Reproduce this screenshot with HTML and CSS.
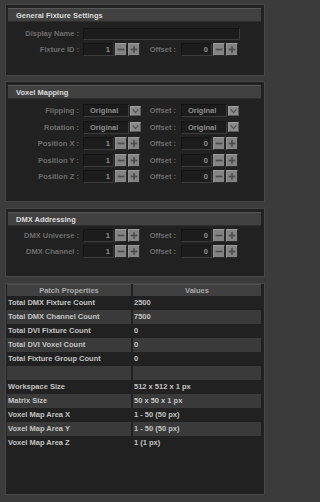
FILE: index.html
```html
<!DOCTYPE html>
<html>
<head>
<meta charset="utf-8">
<link rel="stylesheet" href="styles.css">
</head>
<body>
<div class="page">

  <section class="panel panel-general">
    <div class="panel-head">General Fixture Settings</div>
    <div class="rows">
      <div class="row">
        <span class="lbl">Display Name :</span>
        <span class="field field-wide"></span>
      </div>
      <div class="row">
        <span class="lbl">Fixture ID :</span>
        <span class="spin"><span class="field num">1</span><span class="btn"><svg viewBox="0 0 12 13"><rect x="2" y="5.5" width="8" height="2"/></svg></span><span class="btn"><svg viewBox="0 0 12 13"><rect x="2" y="5.5" width="8" height="2"/><rect x="5" y="2.5" width="2" height="8"/></svg></span></span>
        <span class="lbl">Offset :</span>
        <span class="spin"><span class="field num">0</span><span class="btn"><svg viewBox="0 0 12 13"><rect x="2" y="5.5" width="8" height="2"/></svg></span><span class="btn"><svg viewBox="0 0 12 13"><rect x="2" y="5.5" width="8" height="2"/><rect x="5" y="2.5" width="2" height="8"/></svg></span></span>
      </div>
    </div>
  </section>

  <section class="panel panel-voxel">
    <div class="panel-head">Voxel Mapping</div>
    <div class="rows rows-loose">
      <div class="row">
        <span class="lbl">Flipping :</span>
        <span class="combo"><span class="field sel">Original</span><span class="drop"><svg viewBox="0 0 11 10"><polyline points="2,3 5.5,7 9,3"/></svg></span></span>
        <span class="lbl">Offset :</span>
        <span class="combo"><span class="field sel">Original</span><span class="drop"><svg viewBox="0 0 11 10"><polyline points="2,3 5.5,7 9,3"/></svg></span></span>
      </div>
      <div class="row">
        <span class="lbl">Rotation :</span>
        <span class="combo"><span class="field sel">Original</span><span class="drop"><svg viewBox="0 0 11 10"><polyline points="2,3 5.5,7 9,3"/></svg></span></span>
        <span class="lbl">Offset :</span>
        <span class="combo"><span class="field sel">Original</span><span class="drop"><svg viewBox="0 0 11 10"><polyline points="2,3 5.5,7 9,3"/></svg></span></span>
      </div>
      <div class="row">
        <span class="lbl">Position X :</span>
        <span class="spin"><span class="field num">1</span><span class="btn"><svg viewBox="0 0 12 13"><rect x="2" y="5.5" width="8" height="2"/></svg></span><span class="btn"><svg viewBox="0 0 12 13"><rect x="2" y="5.5" width="8" height="2"/><rect x="5" y="2.5" width="2" height="8"/></svg></span></span>
        <span class="lbl">Offset :</span>
        <span class="spin"><span class="field num">0</span><span class="btn"><svg viewBox="0 0 12 13"><rect x="2" y="5.5" width="8" height="2"/></svg></span><span class="btn"><svg viewBox="0 0 12 13"><rect x="2" y="5.5" width="8" height="2"/><rect x="5" y="2.5" width="2" height="8"/></svg></span></span>
      </div>
      <div class="row">
        <span class="lbl">Position Y :</span>
        <span class="spin"><span class="field num">1</span><span class="btn"><svg viewBox="0 0 12 13"><rect x="2" y="5.5" width="8" height="2"/></svg></span><span class="btn"><svg viewBox="0 0 12 13"><rect x="2" y="5.5" width="8" height="2"/><rect x="5" y="2.5" width="2" height="8"/></svg></span></span>
        <span class="lbl">Offset :</span>
        <span class="spin"><span class="field num">0</span><span class="btn"><svg viewBox="0 0 12 13"><rect x="2" y="5.5" width="8" height="2"/></svg></span><span class="btn"><svg viewBox="0 0 12 13"><rect x="2" y="5.5" width="8" height="2"/><rect x="5" y="2.5" width="2" height="8"/></svg></span></span>
      </div>
      <div class="row">
        <span class="lbl">Position Z :</span>
        <span class="spin"><span class="field num">1</span><span class="btn"><svg viewBox="0 0 12 13"><rect x="2" y="5.5" width="8" height="2"/></svg></span><span class="btn"><svg viewBox="0 0 12 13"><rect x="2" y="5.5" width="8" height="2"/><rect x="5" y="2.5" width="2" height="8"/></svg></span></span>
        <span class="lbl">Offset :</span>
        <span class="spin"><span class="field num">0</span><span class="btn"><svg viewBox="0 0 12 13"><rect x="2" y="5.5" width="8" height="2"/></svg></span><span class="btn"><svg viewBox="0 0 12 13"><rect x="2" y="5.5" width="8" height="2"/><rect x="5" y="2.5" width="2" height="8"/></svg></span></span>
      </div>
    </div>
  </section>

  <section class="panel panel-dmx">
    <div class="panel-head">DMX Addressing</div>
    <div class="rows rows-tight">
      <div class="row">
        <span class="lbl">DMX Universe :</span>
        <span class="spin"><span class="field num">1</span><span class="btn"><svg viewBox="0 0 12 13"><rect x="2" y="5.5" width="8" height="2"/></svg></span><span class="btn"><svg viewBox="0 0 12 13"><rect x="2" y="5.5" width="8" height="2"/><rect x="5" y="2.5" width="2" height="8"/></svg></span></span>
        <span class="lbl">Offset :</span>
        <span class="spin"><span class="field num">0</span><span class="btn"><svg viewBox="0 0 12 13"><rect x="2" y="5.5" width="8" height="2"/></svg></span><span class="btn"><svg viewBox="0 0 12 13"><rect x="2" y="5.5" width="8" height="2"/><rect x="5" y="2.5" width="2" height="8"/></svg></span></span>
      </div>
      <div class="row">
        <span class="lbl">DMX Channel :</span>
        <span class="spin"><span class="field num">1</span><span class="btn"><svg viewBox="0 0 12 13"><rect x="2" y="5.5" width="8" height="2"/></svg></span><span class="btn"><svg viewBox="0 0 12 13"><rect x="2" y="5.5" width="8" height="2"/><rect x="5" y="2.5" width="2" height="8"/></svg></span></span>
        <span class="lbl">Offset :</span>
        <span class="spin"><span class="field num">0</span><span class="btn"><svg viewBox="0 0 12 13"><rect x="2" y="5.5" width="8" height="2"/></svg></span><span class="btn"><svg viewBox="0 0 12 13"><rect x="2" y="5.5" width="8" height="2"/><rect x="5" y="2.5" width="2" height="8"/></svg></span></span>
      </div>
    </div>
  </section>

  <section class="panel panel-table">
    <div class="grid">
      <div class="th">Patch Properties</div><div class="th">Values</div>
      <div class="td">Total DMX Fixture Count</div><div class="td">2500</div>
      <div class="td alt">Total DMX Channel Count</div><div class="td alt">7500</div>
      <div class="td">Total DVI Fixture Count</div><div class="td">0</div>
      <div class="td alt">Total DVI Voxel Count</div><div class="td alt">0</div>
      <div class="td">Total Fixture Group Count</div><div class="td">0</div>
      <div class="td alt"></div><div class="td alt"></div>
      <div class="td">Workspace Size</div><div class="td">512 x 512 x 1 px</div>
      <div class="td alt">Matrix Size</div><div class="td alt">50 x 50 x 1 px</div>
      <div class="td">Voxel Map Area X</div><div class="td">1 - 50 (50 px)</div>
      <div class="td alt">Voxel Map Area Y</div><div class="td alt">1 - 50 (50 px)</div>
      <div class="td">Voxel Map Area Z</div><div class="td">1 (1 px)</div>
    </div>
  </section>

</div>
</body>
</html>
```

FILE: styles.css
```css
* { box-sizing: border-box; }

html, body {
  margin: 0;
  padding: 0;
  background: #3b3b3b;
}

body {
  width: 270px;
  height: 502px;
  overflow: hidden;
  font-family: "Liberation Sans", Arial, sans-serif;
  font-weight: bold;
  font-size: 7.5px;
}

.page {
  display: flex;
  flex-direction: column;
  padding: 4px 0 0 5px;
}

.panel {
  width: 260px;
  background: #212121;
  border: 1px solid #474747;
  padding: 3px 3px 0 2px;
}

.panel-general { height: 72px; margin-bottom: 5px; }
.panel-voxel   { height: 121px; margin-bottom: 6px; }
.panel-dmx     { height: 69px; margin-bottom: 6px; }
.panel-table   { height: 212px; padding: 0 3px 0 1px; }

.panel-head {
  height: 14px;
  line-height: 13px;
  background: #414141;
  border-top: 1px solid #585858;
  border-bottom: 1px solid #2e2e2e;
  color: #dcdcdc;
  padding-left: 8px;
}

.rows {
  display: flex;
  flex-direction: column;
  gap: 3px;
  margin-top: 5px;
}
.rows-loose { gap: 3.5px; }
.rows-tight { margin-top: 3px; }

.row {
  display: grid;
  grid-template-columns: 75px 58px 40px 58px;
  height: 13px;
  align-items: center;
}

.lbl {
  text-align: right;
  color: #6e6e6e;
  white-space: nowrap;
}
.lbl:first-child { padding-right: 4px; }
.lbl:nth-child(3) { padding-right: 5px; }

.field {
  height: 13px;
  background: #1c1c1c;
  border: 1px solid #3c3c3c;
  border-top-color: #141414;
  border-left-color: #141414;
  color: #8e8e8e;
  line-height: 11px;
  display: block;
}

.field-wide {
  width: 157px;
  height: 12px;
}

.spin, .combo {
  display: flex;
  align-items: center;
  height: 13px;
}

.num {
  width: 31px;
  text-align: right;
  padding-right: 3px;
  margin-right: 1px;
}

.btn {
  width: 12px;
  height: 13px;
  background: #848484;
  border: 1px solid #2a2a2a;
  border-top-color: #9c9c9c;
  border-left-color: #939393;
  margin-right: 1px;
  display: flex;
}
.btn svg {
  width: 10px;
  height: 11px;
  fill: #4c4c4c;
}

.sel {
  width: 46px;
  padding-left: 6px;
  margin-right: 1px;
}

.drop {
  width: 11px;
  height: 10px;
  background: #8a8a8a;
  border: 1px solid #a0a0a0;
  border-right-color: #5a5a5a;
  border-bottom-color: #5a5a5a;
  display: flex;
}
.drop svg {
  width: 9px;
  height: 8px;
  fill: none;
  stroke: #505050;
  stroke-width: 1.4;
}

.grid {
  display: grid;
  grid-template-columns: 124px 128px;
  grid-template-rows: 12px;
  grid-auto-rows: 14px;
  column-gap: 2px;
}

.th {
  background: #3f3f3f;
  border-top: 1px solid #505050;
  color: #a9a9a9;
  text-align: center;
  line-height: 11px;
}

.td {
  color: #c4c4c4;
  line-height: 14px;
  padding-left: 1px;
  white-space: nowrap;
}

.td.alt {
  background: #3a3a3a;
}
```
